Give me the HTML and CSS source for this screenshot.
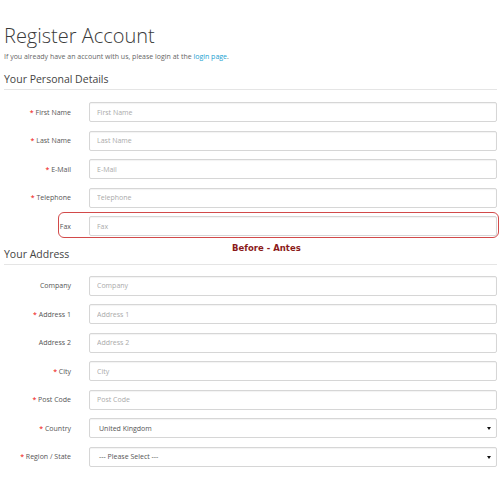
FILE: index.html
```html
<!DOCTYPE html>
<html>
<head>
<meta charset="utf-8">
<link rel="stylesheet" href="styles.css">
</head>
<body>
<div class="page">
  <h1 class="title">Register Account</h1>
  <p class="intro">If you already have an account with us, please login at the <a href="#" class="link">login page</a>.</p>

  <div class="legend">Your Personal Details</div>
  <div class="fields first">
    <div class="row"><label class="lbl"><span class="req">*</span> First Name</label><input class="inp" placeholder="First Name"></div>
    <div class="row"><label class="lbl"><span class="req">*</span> Last Name</label><input class="inp" placeholder="Last Name"></div>
    <div class="row"><label class="lbl"><span class="req">*</span> E-Mail</label><input class="inp" placeholder="E-Mail"></div>
    <div class="row"><label class="lbl"><span class="req">*</span> Telephone</label><input class="inp" placeholder="Telephone"></div>
    <div class="row fax"><label class="lbl">Fax</label><input class="inp" placeholder="Fax"><span class="note">Before - Antes</span></div>
  </div>

  <div class="legend second">Your Address</div>
  <div class="fields addr">
    <div class="row"><label class="lbl">Company</label><input class="inp" placeholder="Company"></div>
    <div class="row"><label class="lbl"><span class="req">*</span> Address 1</label><input class="inp" placeholder="Address 1"></div>
    <div class="row"><label class="lbl">Address 2</label><input class="inp" placeholder="Address 2"></div>
    <div class="row"><label class="lbl"><span class="req">*</span> City</label><input class="inp" placeholder="City"></div>
    <div class="row"><label class="lbl"><span class="req">*</span> Post Code</label><input class="inp" placeholder="Post Code"></div>
    <div class="row"><label class="lbl"><span class="req">*</span> Country</label><div class="sel">United Kingdom</div></div>
    <div class="row"><label class="lbl"><span class="req">*</span> Region / State</label><div class="sel">--- Please Select ---</div></div>
  </div>
</div>
</body>
</html>
```
FILE: styles.css
```css
html, body {
  margin: 0;
  padding: 0;
  background: #fff;
}
.page {
  padding: 0 3px 0 4px;
  font-family: "Open Sans", "Liberation Sans", sans-serif;
  color: #666;
}
.title {
  margin: 21px 0 0;
  font-size: 20px;
  line-height: 29px;
  font-weight: 300;
  color: #3a3a3a;
}
.intro {
  margin: 1px 0 0;
  font-size: 7px;
  line-height: 12px;
  color: #666;
}
.link {
  color: #23a1d1;
  text-decoration: none;
}
.legend {
  margin-top: 7px;
  font-size: 10.5px;
  line-height: 18px;
  padding-bottom: 1px;
  border-bottom: 1px solid #e5e5e5;
  color: #444;
}
.legend.second {
  margin-top: 0.5px;
}
.fields.first {
  margin-top: 12px;
}
.fields.addr {
  margin-top: 11px;
}
.row {
  display: flex;
  align-items: center;
  gap: 18px;
  height: 20px;
  margin-bottom: 8.5px;
}
.lbl {
  width: 67px;
  flex: none;
  text-align: right;
  font-size: 7px;
  color: #555;
  white-space: nowrap;
}
.req {
  color: #e00;
}
.inp, .sel {
  flex: 1;
  box-sizing: border-box;
  height: 20px;
  border: 1px solid #d6d6d6;
  border-radius: 2px;
  padding: 0 7px;
  font-family: "Open Sans", "Liberation Sans", sans-serif;
  font-size: 7px;
  color: #555;
  background: #fff;
  box-shadow: inset 0 1px 1px rgba(0,0,0,0.05);
  outline: none;
}
.inp::placeholder {
  color: #aaa;
}
.sel {
  position: relative;
  display: flex;
  align-items: center;
  padding-left: 9px;
  color: #555;
}
.sel::after {
  content: "";
  position: absolute;
  right: 5px;
  top: 8px;
  border-left: 2px solid transparent;
  border-right: 2px solid transparent;
  border-top: 3.5px solid #111;
}
.fax {
  position: relative;
}
.fax::before {
  content: "";
  position: absolute;
  left: 54px;
  top: -4px;
  width: 441px;
  height: 26px;
  box-sizing: border-box;
  border: 1.5px solid #d24a4a;
  border-radius: 6px;
  pointer-events: none;
}
.note {
  position: absolute;
  left: 228px;
  top: 27px;
  font-family: "DejaVu Sans", Verdana, sans-serif;
  font-weight: bold;
  font-size: 8.5px;
  line-height: 10px;
  color: #8b1a1a;
  white-space: nowrap;
}
```
